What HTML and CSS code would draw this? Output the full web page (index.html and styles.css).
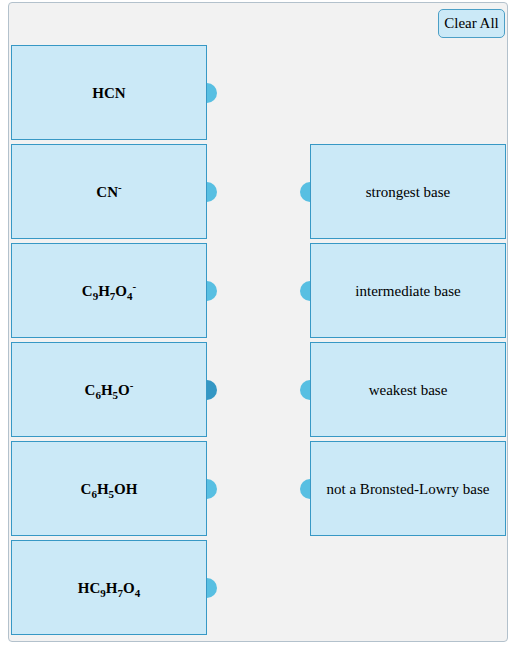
FILE: index.html
```html
<!DOCTYPE html>
<html lang="en">

<head>
	<meta charset="UTF-8">
	<title>Match bases</title>
	<link rel="stylesheet" href="styles.css">
</head>

<body>
	<div class="matcher">
		<div class="toolbar">
			<button class="clear-button">Clear All</button>
		</div>
		<div class="board">
			<div class="source row-1">
				<div class="card bold"><span>HCN</span></div>
				<span class="dot dot-right"></span>
			</div>
			<div class="source row-2">
				<div class="card bold"><span>CN<sup>-</sup></span></div>
				<span class="dot dot-right"></span>
			</div>
			<div class="target row-2">
				<span class="dot dot-left"></span>
				<div class="card"><span>strongest base</span></div>
			</div>
			<div class="source row-3">
				<div class="card bold"><span>C<sub>9</sub>H<sub>7</sub>O<sub>4</sub><sup>-</sup></span></div>
				<span class="dot dot-right"></span>
			</div>
			<div class="target row-3">
				<span class="dot dot-left"></span>
				<div class="card"><span>intermediate base</span></div>
			</div>
			<div class="source row-4">
				<div class="card bold"><span>C<sub>6</sub>H<sub>5</sub>O<sup>-</sup></span></div>
				<span class="dot dot-right active"></span>
			</div>
			<div class="target row-4">
				<span class="dot dot-left"></span>
				<div class="card"><span>weakest base</span></div>
			</div>
			<div class="source row-5">
				<div class="card bold"><span>C<sub>6</sub>H<sub>5</sub>OH</span></div>
				<span class="dot dot-right"></span>
			</div>
			<div class="target row-5">
				<span class="dot dot-left"></span>
				<div class="card"><span>not a Bronsted-Lowry base</span></div>
			</div>
			<div class="source row-6">
				<div class="card bold"><span>HC<sub>9</sub>H<sub>7</sub>O<sub>4</sub></span></div>
				<span class="dot dot-right"></span>
			</div>
		</div>
	</div>
</body>

</html>
```

FILE: styles.css
```css
body {
	font-family: "Liberation Serif", "Times New Roman", serif;
	margin: 0;
	padding: 0;
	background: #ffffff;
	color: #000000;
}

.matcher {
	width: 500px;
	margin: 2px 0 0 8px;
	padding: 6px 1px 6px 2px;
	box-sizing: border-box;
	background: #f2f2f2;
	border: 1px solid #b3c1cc;
	border-radius: 4px;
}

.toolbar {
	display: flex;
	justify-content: flex-end;
	margin-bottom: 7px;
}

.clear-button {
	font-family: "Liberation Serif", "Times New Roman", serif;
	font-size: 15px;
	height: 29px;
	width: 67px;
	padding: 0;
	margin-right: 1px;
	background: #cbe9f7;
	color: #000000;
	border: 1px solid #4c9fc6;
	border-radius: 5px;
	cursor: pointer;
}

.board {
	display: grid;
	grid-template-columns: 206px 206px;
	grid-template-rows: repeat(6, 95px);
	row-gap: 4px;
	justify-content: space-between;
}

.source {
	grid-column: 1;
	display: flex;
	align-items: center;
}

.target {
	grid-column: 2;
	display: flex;
	align-items: center;
}

.row-1 { grid-row: 1; }
.row-2 { grid-row: 2; }
.row-3 { grid-row: 3; }
.row-4 { grid-row: 4; }
.row-5 { grid-row: 5; }
.row-6 { grid-row: 6; }

.card {
	width: 196px;
	height: 95px;
	box-sizing: border-box;
	display: flex;
	align-items: center;
	justify-content: center;
	background: #cbe9f7;
	border: 1px solid #3798c5;
	font-size: 15px;
	line-height: 18px;
}

.bold {
	font-weight: bold;
}

.card sub,
.card sup {
	font-size: 11px;
	line-height: 0;
}

.card sub {
	vertical-align: -4px;
}

.card sup {
	vertical-align: 6px;
}

.dot {
	display: block;
	width: 10px;
	height: 20px;
	background: #58bfe2;
}

.dot-right {
	border-radius: 0 10px 10px 0;
}

.dot-left {
	border-radius: 10px 0 0 10px;
}

.dot.active {
	background: #3497c4;
}
```
